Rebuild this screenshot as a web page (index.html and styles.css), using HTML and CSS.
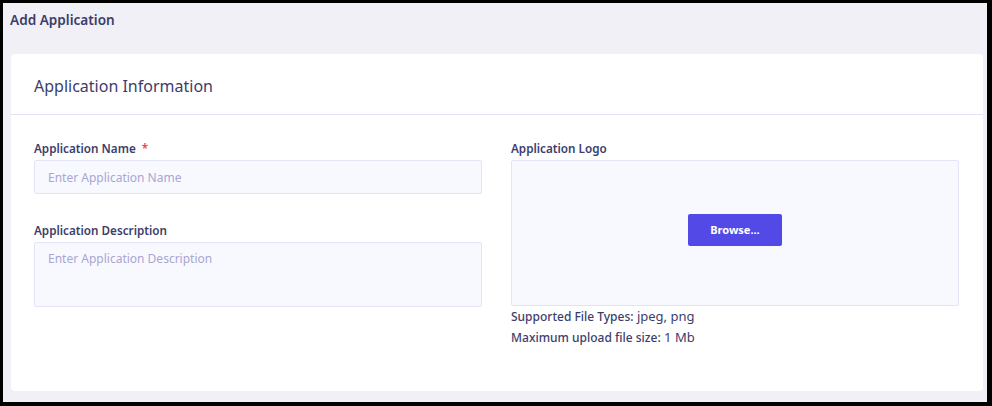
FILE: index.html
```html
<!DOCTYPE html>
<html lang="en">
<head>
    <meta charset="UTF-8">
    <meta name="viewport" content="width=device-width, initial-scale=1.0">
    <title>Add Application</title>
    <link rel="stylesheet" href="styles.css">
</head>
<body>
    <div class="page">
        <h1 class="page-title">Add Application</h1>

        <div class="card">
            <div class="card-header">
                <h2>Application Information</h2>
            </div>
            <div class="card-body">
                <div class="col">
                    <div class="field">
                        <label for="app-name">Application Name <span class="req">*</span></label>
                        <input id="app-name" type="text" placeholder="Enter Application Name">
                    </div>
                    <div class="field">
                        <label for="app-desc">Application Description</label>
                        <textarea id="app-desc" placeholder="Enter Application Description"></textarea>
                    </div>
                </div>
                <div class="col">
                    <div class="field">
                        <label>Application Logo</label>
                        <div class="dropzone">
                            <button type="button">Browse...</button>
                        </div>
                        <div class="hint"><b>Supported File Types:</b> jpeg, png</div>
                        <div class="hint"><b>Maximum upload file size:</b> 1 Mb</div>
                    </div>
                </div>
            </div>
        </div>
    </div>
</body>
</html>
```

FILE: styles.css
```css
* {
    box-sizing: border-box;
}
html, body {
    height: 100%;
}
body {
    margin: 0;
    background: #000;
    padding: 3px 5px 4px 3px;
    font-family: "Noto Sans", "Open Sans", Arial, sans-serif;
    color: #3d3d6b;
}
.page {
    height: 100%;
    background: #f0f0f6;
    padding: 7px 4px 11px 8px;
}
.page-title {
    margin: 0 0 24px -1px;
    font-size: 13.6px;
    line-height: 20px;
    font-weight: 600;
}
.card {
    background: #fff;
    border-radius: 4px;
    height: 337px;
}
.card-header {
    padding: 20px 23px 16px;
    border-bottom: 1px solid #e3e2f8;
}
.card-header h2 {
    margin: 0;
    font-size: 16px;
    line-height: 24px;
    font-weight: 400;
}
.card-body {
    display: grid;
    grid-template-columns: 448px 448px;
    column-gap: 29px;
    padding: 25px 23px 0;
}
.field {
    margin-bottom: 28px;
}
.field label {
    display: block;
    font-size: 11.7px;
    line-height: 16px;
    font-weight: 600;
    margin-bottom: 4px;
}
.req {
    color: #e5484d;
    margin-left: 3px;
}
input, textarea {
    display: block;
    width: 100%;
    background: #f8f9fe;
    border: 1px solid #e4e4f8;
    border-radius: 2px;
    font-family: inherit;
    font-size: 12px;
    color: #3d3d6b;
    padding: 0 13px;
    outline: none;
}
input {
    height: 34px;
}
textarea {
    height: 65px;
    padding-top: 7px;
    resize: none;
}
input::placeholder, textarea::placeholder {
    color: #a9a6d2;
}
.dropzone {
    height: 146px;
    background: #f8f9fe;
    border: 1px solid #e4e4f8;
    border-radius: 2px;
    display: flex;
    align-items: center;
    justify-content: center;
}
.dropzone button {
    width: 94px;
    height: 32px;
    margin-bottom: 7px;
    background: #5249e6;
    color: #fff;
    border: none;
    border-radius: 2px;
    font-family: inherit;
    font-size: 11px;
    font-weight: 700;
    cursor: pointer;
}
.hint {
    font-size: 13px;
    line-height: 21px;
}
.hint b {
    font-size: 12px;
    font-weight: 500;
}
```
